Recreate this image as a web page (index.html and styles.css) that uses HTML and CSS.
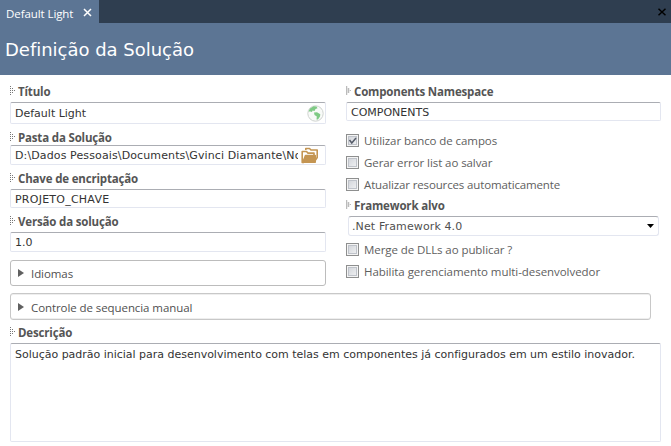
FILE: index.html
```html
<!DOCTYPE html>
<html lang="pt-BR">
<head>
<meta charset="utf-8">
<title>Default Light</title>
<link rel="stylesheet" href="styles.css">
</head>
<body>
<header class="tabs">
  <div class="tab"><span>Default Light</span>
    <svg class="tab-x" width="9" height="9" viewBox="0 0 9 9"><path d="M1 1l7 7M8 1l-7 7" stroke="#fff" stroke-width="1.5" fill="none"/></svg>
  </div>
  <svg class="close-x" width="8" height="8" viewBox="0 0 8 8"><path d="M.5 .8l7 6.4M7.500 .8l-7 6.4" stroke="#000" stroke-width="1.5" fill="none"/></svg>
</header>
<div class="banner"><h1>Definição da Solução</h1></div>
<main class="form">
  <div class="columns">
    <section class="left">
      <div class="label"><svg class="grip" width="5" height="9" viewBox="0 0 5 9"><path d="M.5 0v9M2.500 2v5M4.500 4v1" stroke="#777" stroke-dasharray="1 1"/></svg>Título</div>
      <div class="input title"><span>Default Light</span>
        <svg class="globe" width="17" height="17" viewBox="0 0 17 17"><circle cx="8.500" cy="8.500" r="7.700" fill="#f8faf8" stroke="#cfd3cf"/><path d="M1.500 6.500L3 3.500 6.500 1.300 9.500 1.500 10.500 3.200 8.500 4 7.500 6 5.500 5.500 5 7 3.500 6.500zM7 7.500l3-.3 3.300 2L13 11.500l-2 3L9.500 14.500l.3-3L7.500 10z" fill="#7fca85"/></svg>
      </div>
      <div class="label"><svg class="grip" width="5" height="9" viewBox="0 0 5 9"><path d="M.5 0v9M2.500 2v5M4.500 4v1" stroke="#777" stroke-dasharray="1 1"/></svg>Pasta da Solução</div>
      <div class="input path"><span class="clip">D:\Dados Pessoais\Documents\Gvinci Diamante\Novo</span>
        <svg class="folder" width="18" height="17" viewBox="0 0 18 17"><g fill="none" stroke="#c49552" stroke-width="1.600" stroke-linejoin="round"><path d="M4.800 3V1.500h3.700l1.500 1.500h6.200v7.500L14.500 13"/><path d="M3 15.500H1.200V4.500h4.300l1.500 1.600h6V8"/><path d="M4.500 8.500h9.700v6.700H1.800z" fill="#c49552"/></g></svg>
      </div>
      <div class="label key-label"><svg class="grip" width="5" height="9" viewBox="0 0 5 9"><path d="M.5 0v9M2.500 2v5M4.500 4v1" stroke="#777" stroke-dasharray="1 1"/></svg>Chave de encriptação</div>
      <div class="input key"><span>PROJETO_CHAVE</span></div>
      <div class="label version-label"><svg class="grip" width="5" height="9" viewBox="0 0 5 9"><path d="M.5 0v9M2.500 2v5M4.500 4v1" stroke="#777" stroke-dasharray="1 1"/></svg>Versão da solução</div>
      <div class="input version"><span>1.0</span></div>
      <div class="panel"><i class="arrow"></i><span>Idiomas</span></div>
    </section>
    <section class="right">
      <div class="label soft"><svg class="grip" width="5" height="9" viewBox="0 0 5 9"><path d="M.5 0v9M2.500 2v5M4.500 4v1" stroke="#bbb" stroke-width="1.5"/></svg>Components Namespace</div>
      <div class="input namespace"><span>COMPONENTS</span></div>
      <div class="checks">
        <div class="check"><svg class="box" width="13" height="13" viewBox="0 0 11 11"><path d="M2.500 5l2.300 3L9 3" fill="none" stroke="#555b68" stroke-width="1.500"/></svg><span>Utilizar banco de campos</span></div>
        <div class="check"><i class="box"></i><span>Gerar error list ao salvar</span></div>
        <div class="check auto"><i class="box"></i><span>Atualizar resources automaticamente</span></div>
      </div>
      <div class="label soft"><svg class="grip" width="5" height="9" viewBox="0 0 5 9"><path d="M.5 0v9M2.500 2v5M4.500 4v1" stroke="#bbb" stroke-width="1.5"/></svg>Framework alvo</div>
      <div class="input select"><span>.Net Framework 4.0</span><svg width="7" height="4" viewBox="0 0 7 4"><path d="M0 0h7L3.500 4z"/></svg></div>
      <div class="checks lower">
        <div class="check"><i class="box"></i><span>Merge de DLLs ao publicar ?</span></div>
        <div class="check multi"><i class="box"></i><span>Habilita gerenciamento multi-desenvolvedor</span></div>
      </div>
    </section>
  </div>
  <div class="panel wide"><i class="arrow"></i><span>Controle de sequencia manual</span></div>
  <div class="label desc-label"><svg class="grip" width="5" height="9" viewBox="0 0 5 9"><path d="M.5 0v9M2.500 2v5M4.500 4v1" stroke="#777" stroke-dasharray="1 1"/></svg>Descrição</div>
  <div class="input area"><span>Solução padrão inicial para desenvolvimento com telas em componentes já configurados em um estilo inovador.</span></div>
</main>
</body>
</html>
```
FILE: styles.css
```css
* { box-sizing: border-box; }
body { margin: 0; width: 671px; height: 446px; overflow: hidden; background: #fff; color: #505050; font: 11.5px/16px "Open Sans", sans-serif; letter-spacing: -.08px; white-space: nowrap; }
svg { display: block; flex: none; }
.tabs { display: flex; justify-content: space-between; height: 23px; background: #2f3e50; }
.tab { display: flex; align-items: center; width: 99px; padding: 4px 0 0 6px; background: #5c7594; color: #fff; }
.tab-x { margin: -3px 0 0 10px; }
.close-x { margin: 8px 5px 0 0; }
.banner { height: 52px; padding: 15px 0 0 5px; background: #5c7594; color: #fff; }
h1 { margin: 0; font: 18px/24px "DejaVu Sans", sans-serif; letter-spacing: -.02px; }
.form { padding: 8px 10px 0; }
.columns { display: flex; gap: 20px; height: 210px; }
.left { width: 316px; }
.right { width: 315px; }
.label { display: flex; height: 19px; color: #555; font: bold 11.5px/18px "Open Sans", sans-serif; letter-spacing: -.17px; }
.grip { margin: 3px 3px 0 0; }
.input { display: flex; align-items: center; padding: 0 4px; border: 1px solid #e3e6f0; border-top-color: #abadb3; border-radius: 2px; color: #333; font: 11px/14px "DejaVu Sans", sans-serif; letter-spacing: 0; }
.input span { padding-top: 2px; }
.title { height: 22px; margin-bottom: 5px; justify-content: space-between; padding-right: 1px; }
.path { height: 20px; margin-top: -3px; padding-right: 6px; justify-content: space-between; }
.clip { width: 283px; overflow: hidden; letter-spacing: .12px; }
.key-label { margin-top: 5px; }
.key { height: 19px; letter-spacing: .24px; }
.version-label { margin-top: 5px; }
.version { height: 20px; }
.panel { display: flex; align-items: center; width: 316px; height: 26px; margin-top: 8px; padding: 2px 0 0 7px; border: 1px solid #bcbcbc; border-radius: 3px; }
.arrow { margin: -2px 7px 0 0; border-left: 6px solid #606060; border-top: 4px solid transparent; border-bottom: 4px solid transparent; }
.wide { width: 641px; height: 27px; margin-top: 0; border-color: #c8c8c8; box-shadow: inset 0 1px #eee, inset 0 -1px #eee; }
.namespace { height: 19px; }
.checks { padding-top: 8px; }
.check { display: flex; align-items: center; gap: 5px; height: 22px; color: #5e5e5e; }
.check span { padding-top: 1px; }
.auto { letter-spacing: -.14px; }
.multi { letter-spacing: -.05px; }
.box { width: 13px; height: 13px; border: 1px solid #8e8f8f; box-shadow: inset 0 0 0 1px #f4f4f4, inset 0 0 0 2px #bfc3ca; background: linear-gradient(135deg, #cdd0d6, #f4f5f6); }
.soft + .select { width: 311px; height: 20px; margin-left: 2px; padding: 0 4px 0 3px; justify-content: space-between; border-radius: 3px; color: #505050; letter-spacing: .12px; }
.checks + .label { margin-top: 2px; }
.lower { padding-top: 2px; }
.desc-label { margin-top: 4px; }
.area { height: 99px; align-items: flex-start; padding-top: 2px; letter-spacing: -.015px; }
```
